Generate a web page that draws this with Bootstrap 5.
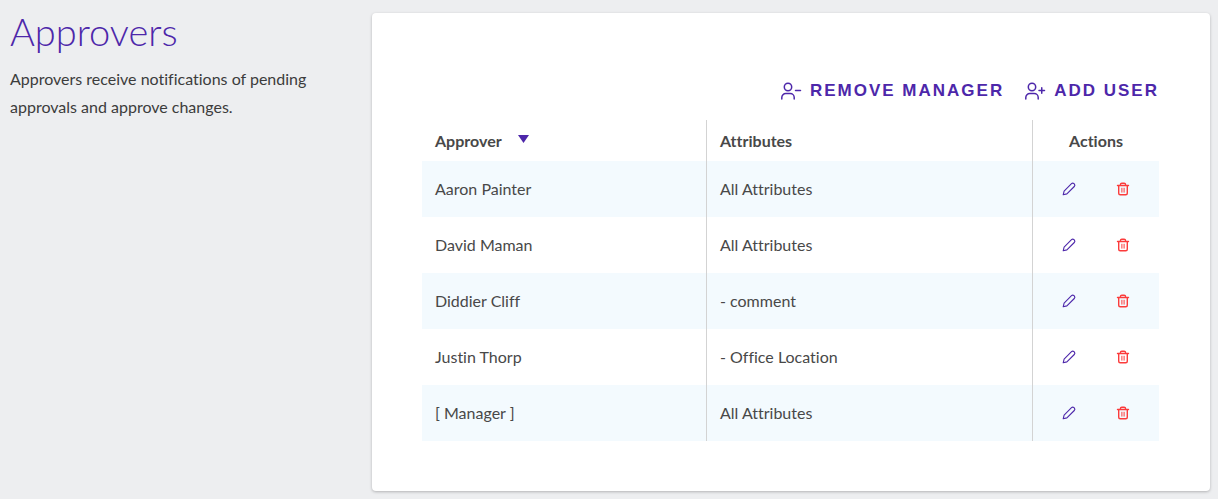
<!DOCTYPE html>
<html lang="en">
<head>
<meta charset="utf-8">
<meta name="viewport" content="width=device-width, initial-scale=1">
<title>Approvers</title>
<link href="https://cdn.jsdelivr.net/npm/bootstrap@5.3.0/dist/css/bootstrap.min.css" rel="stylesheet">
<style>
  :root { --brand: #4d27aa; --ink: #484848; --danger: #fb3b3b; }
  body { background: #edeef0; color: var(--ink); font-family: Lato, sans-serif; font-size: 16px; line-height: 28px; font-variant-ligatures: none; }
  .page { padding: 13px 8px 8px 10px; }
  .intro { flex: 0 0 30%; padding-right: 48px; }
  .intro h1 { color: var(--brand); font-size: 38px; font-weight: 300; line-height: 36px; margin-bottom: 16px; }
  .intro p { color: #3c3c3c; }
  .panel { padding: 60px 51px 50px 50px; margin-left: 2px; border: 0; border-radius: 4px; box-shadow: 0 1px 3px rgba(0,0,0,.25); }
  .tools { gap: 20px; padding: 4px 0 15px; }
  .tool { display: flex; align-items: center; gap: 8px; padding: 0; border: 0; background: none; color: var(--brand);
    font: bold 17px/28px "Liberation Sans", Arial, sans-serif; letter-spacing: 2px; }
  svg { display: block; fill: none; stroke: currentColor; stroke-linecap: round; stroke-linejoin: round; }
  .approvers { --bs-table-bg: transparent; color: var(--ink); table-layout: fixed; border-collapse: separate; border-spacing: 0; }
  .approvers > :not(caption) > * > * { border: 0; color: var(--ink); padding: 14px 13px; }
  .approvers > thead > tr > th { padding: 7px 13px 6px; font-weight: 700; }
  .approvers > :not(caption) > tr > :not(:first-child) { border-left: 1px solid #d3d3d3; }
  .approvers > tbody > tr:nth-child(odd) > td { background: #f3fafe; }
  .col-name { width: 284px; }
  .col-actions { width: 127px; }
  .sort { padding: 0; border: 0; background: none; color: inherit; font: inherit; display: flex; align-items: center; gap: 16px; }
  .sort svg { fill: var(--brand); stroke: none; margin-bottom: 4px; }
  .act { padding: 0; border: 0; background: none; }
  .act-edit { color: var(--brand); }
  .act-delete { color: var(--danger); }
  .acts { gap: 38px; height: 28px; }
  @media (max-width: 900px) { .col-name, .col-actions { width: auto; } .intro { flex-basis: auto; } }
</style>
</head>
<body>
<svg width="0" height="0" class="position-absolute" aria-hidden="true">
  <symbol id="pencil" viewBox="0 0 16 16"><path stroke-width="1.100" d="M2.200 13.800l.9-3.700 7.400-7.400a1.800 1.800 0 0 1 2.500 0l.3.300a1.800 1.800 0 0 1 0 2.500l-7.400 7.400z"/></symbol>
  <symbol id="trash" viewBox="0 0 16 16"><path stroke-width="1.400" d="M2.500 4.500h11M3.700 4.500v7.700a1.500 1.500 0 0 0 1.500 1.500h5.600a1.500 1.500 0 0 0 1.500-1.500V4.500M5.500 4.300v-.8a1.300 1.300 0 0 1 1.300-1.300h2.400a1.300 1.300 0 0 1 1.300 1.300v.8"/><path stroke-width="1" d="M6.900 7.200v4M9.100 7.200v4"/></symbol>
</svg>
<main class="page d-flex flex-column flex-lg-row align-items-stretch">
  <section class="intro">
    <h1>Approvers</h1>
    <p class="mb-0">Approvers receive notifications of pending approvals and approve changes.</p>
  </section>
  <section class="panel card flex-grow-1">
    <div class="tools d-flex flex-wrap justify-content-end">
      <button type="button" class="tool">
        <svg width="22" height="20" viewBox="0 0 22 20" stroke-width="1.500" aria-hidden="true"><circle cx="8" cy="6" r="3.700"/><path d="M1.800 18v-1.500a4 4 0 0 1 4-4h4.400a4 4 0 0 1 4 4V18M15.500 9.500h5"/></svg>
        REMOVE MANAGER</button>
      <button type="button" class="tool">
        <svg width="22" height="20" viewBox="0 0 22 20" stroke-width="1.500" aria-hidden="true"><circle cx="8" cy="6" r="3.700"/><path d="M1.800 18v-1.500a4 4 0 0 1 4-4h4.400a4 4 0 0 1 4 4V18M15 9.500h5.500M17.750 6.800v5.400"/></svg>
        ADD USER</button>
    </div>
    <table class="table approvers mb-0">
      <colgroup><col class="col-name"><col class="col-attr"><col class="col-actions"></colgroup>
      <thead>
        <tr>
          <th scope="col"><button type="button" class="sort">Approver <svg width="11" height="8" viewBox="0 0 11 8" aria-hidden="true"><path d="M0 0h11L5.500 8z"/></svg></button></th>
          <th scope="col">Attributes</th>
          <th scope="col" class="text-center">Actions</th>
        </tr>
      </thead>
      <tbody>
        <tr><td>Aaron Painter</td><td>All Attributes</td><td><div class="acts d-flex align-items-center justify-content-center"><button type="button" class="act act-edit" aria-label="Edit Aaron Painter"><svg width="16" height="16"><use href="#pencil"/></svg></button><button type="button" class="act act-delete" aria-label="Delete Aaron Painter"><svg width="16" height="16"><use href="#trash"/></svg></button></div></td></tr>
        <tr><td>David Maman</td><td>All Attributes</td><td><div class="acts d-flex align-items-center justify-content-center"><button type="button" class="act act-edit" aria-label="Edit David Maman"><svg width="16" height="16"><use href="#pencil"/></svg></button><button type="button" class="act act-delete" aria-label="Delete David Maman"><svg width="16" height="16"><use href="#trash"/></svg></button></div></td></tr>
        <tr><td>Diddier Cliff</td><td>- comment</td><td><div class="acts d-flex align-items-center justify-content-center"><button type="button" class="act act-edit" aria-label="Edit Diddier Cliff"><svg width="16" height="16"><use href="#pencil"/></svg></button><button type="button" class="act act-delete" aria-label="Delete Diddier Cliff"><svg width="16" height="16"><use href="#trash"/></svg></button></div></td></tr>
        <tr><td>Justin Thorp</td><td>- Office Location</td><td><div class="acts d-flex align-items-center justify-content-center"><button type="button" class="act act-edit" aria-label="Edit Justin Thorp"><svg width="16" height="16"><use href="#pencil"/></svg></button><button type="button" class="act act-delete" aria-label="Delete Justin Thorp"><svg width="16" height="16"><use href="#trash"/></svg></button></div></td></tr>
        <tr><td>[ Manager ]</td><td>All Attributes</td><td><div class="acts d-flex align-items-center justify-content-center"><button type="button" class="act act-edit" aria-label="Edit Manager"><svg width="16" height="16"><use href="#pencil"/></svg></button><button type="button" class="act act-delete" aria-label="Delete Manager"><svg width="16" height="16"><use href="#trash"/></svg></button></div></td></tr>
      </tbody>
    </table>
  </section>
</main>
<script src="https://cdn.jsdelivr.net/npm/bootstrap@5.3.0/dist/js/bootstrap.bundle.min.js"></script>
</body>
</html>
